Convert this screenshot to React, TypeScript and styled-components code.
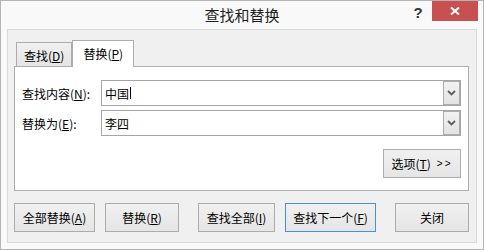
import React from "react";
import styled, { createGlobalStyle } from "styled-components";

const GlobalStyle = createGlobalStyle`
  html, body { margin: 0; padding: 0; background: #ffffff; }
  body {
    font-family: "Noto Sans CJK SC", "Noto Sans", sans-serif;
    font-size: 12px;
    color: #000;
  }
  * { box-sizing: border-box; }
  u { text-underline-offset: 1px; }
`;

const Window = styled.div`
  width: 484px;
  height: 250px;
  border: 1px solid #b4b4b4;
  background: #f9f9f9;
  display: flex;
  flex-direction: column;
`;

const TitleBar = styled.div`
  height: 28px;
  flex: none;
  display: grid;
  grid-template-columns: 1fr auto 1fr;
  align-items: start;
`;

const Title = styled.div`
  font-size: 15px;
  line-height: 28px;
  color: #1e1e1e;
  white-space: nowrap;
`;

const Controls = styled.div`
  display: flex;
  justify-content: flex-end;
  align-items: flex-start;
  margin-right: 5px;
`;

const HelpButton = styled.div`
  width: 28px;
  height: 22px;
  display: flex;
  align-items: center;
  justify-content: center;
  font-family: "Liberation Sans", Arial, sans-serif;
  font-weight: bold;
  font-size: 15px;
  color: #333;
`;

const CloseButton = styled.div`
  width: 46px;
  height: 20px;
  background: #c75050;
  display: flex;
  align-items: center;
  justify-content: center;
`;

const Panel = styled.div`
  flex: 1;
  margin: 0 6px 6px;
  border: 1px solid #d9d9d9;
  background: #f0f0f0;
  padding: 10px 7px 10px 6px;
  display: flex;
  flex-direction: column;
`;

const TabStrip = styled.div`
  height: 26px;
  flex: none;
  display: flex;
  align-items: flex-end;
  padding-left: 2px;
  position: relative;
  z-index: 1;
`;

const Tab = styled.div<{ $active?: boolean }>`
  height: ${(p) => (p.$active ? "27px" : "24px")};
  margin-bottom: ${(p) => (p.$active ? "-1px" : "0")};
  padding: ${(p) => (p.$active ? "0 10px 1px" : "1px 7px 0")};
  border: 1px solid #acacac;
  border-bottom: none;
  background: ${(p) =>
    p.$active ? "#ffffff" : "linear-gradient(#f0f0f0, #e5e5e5)"};
  display: flex;
  align-items: center;
  white-space: nowrap;
`;

const Content = styled.div`
  height: 125px;
  flex: none;
  border: 1px solid #adadad;
  background: #ffffff;
  padding: 13px 7px 0;
  display: flex;
  flex-direction: column;
  gap: 4px;
`;

const FieldRow = styled.div`
  display: grid;
  grid-template-columns: 79px 1fr;
  align-items: center;
`;

const Label = styled.div`
  white-space: nowrap;
`;

const Combo = styled.div`
  height: 26px;
  display: flex;
  border: 1px solid #a5a5a5;
  background: #fff;
`;

const ComboText = styled.div`
  flex: 1;
  padding-left: 3px;
  display: flex;
  align-items: center;
  white-space: nowrap;
`;

const Caret = styled.span`
  display: inline-block;
  width: 1px;
  height: 12px;
  margin-left: 1px;
  background: #000;
`;

const DropButton = styled.div`
  width: 17px;
  border: 1px solid #adadad;
  background: linear-gradient(#f2f2f2, #e3e3e3);
  display: flex;
  align-items: center;
  justify-content: center;
`;

const OptionsRow = styled.div`
  display: flex;
  justify-content: flex-end;
  margin-top: 9px;
`;

const Button = styled.div<{ $w: number; $default?: boolean }>`
  width: ${(p) => p.$w}px;
  height: 29px;
  border: 1px solid ${(p) => (p.$default ? "#4a90d9" : "#acacac")};
  background: linear-gradient(#f0f0f0, #e5e5e5);
  display: flex;
  align-items: center;
  justify-content: center;
  white-space: nowrap;
`;

const Arrows = styled.span`
  margin-left: 6px;
  letter-spacing: 2px;
  font-family: "Liberation Sans", Arial, sans-serif;
  font-size: 10px;
`;

const ButtonRow = styled.div`
  margin-top: 12px;
  display: flex;
  gap: 19px;
`;

const ButtonGroup = styled.div`
  display: flex;
  gap: 10px;
`;

const Chevron = () => (
  <svg width="9" height="6" viewBox="0 0 9 6">
    <path d="M1 1 L4.5 4.5 L8 1" fill="none" stroke="#5f5f5f" strokeWidth="1.8" />
  </svg>
);

const CloseX = () => (
  <svg width="10" height="8" viewBox="0 0 10 8">
    <path d="M1 0.5 L9 7.5 M9 0.5 L1 7.5" stroke="#fff" strokeWidth="2" />
  </svg>
);

export default function App() {
  return (
    <>
      <GlobalStyle />
      <Window>
        <TitleBar>
          <div />
          <Title>查找和替换</Title>
          <Controls>
            <HelpButton>?</HelpButton>
            <CloseButton>
              <CloseX />
            </CloseButton>
          </Controls>
        </TitleBar>
        <Panel>
          <TabStrip>
            <Tab>
              查找(<u>D</u>)
            </Tab>
            <Tab $active>
              替换(<u>P</u>)
            </Tab>
          </TabStrip>
          <Content>
            <FieldRow>
              <Label>
                查找内容(<u>N</u>):
              </Label>
              <Combo>
                <ComboText>
                  中国
                  <Caret />
                </ComboText>
                <DropButton>
                  <Chevron />
                </DropButton>
              </Combo>
            </FieldRow>
            <FieldRow>
              <Label>
                替换为(<u>E</u>):
              </Label>
              <Combo>
                <ComboText>李四</ComboText>
                <DropButton>
                  <Chevron />
                </DropButton>
              </Combo>
            </FieldRow>
            <OptionsRow>
              <Button $w={78}>
                选项(<u>T</u>)<Arrows>&gt;&gt;</Arrows>
              </Button>
            </OptionsRow>
          </Content>
          <ButtonRow>
            <ButtonGroup>
              <Button $w={81}>
                全部替换(<u>A</u>)
              </Button>
              <Button $w={74}>
                替换(<u>R</u>)
              </Button>
            </ButtonGroup>
            <ButtonGroup>
              <Button $w={77}>
                查找全部(<u>I</u>)
              </Button>
              <Button $w={91} $default>
                查找下一个(<u>F</u>)
              </Button>
            </ButtonGroup>
            <Button $w={74}>关闭</Button>
          </ButtonRow>
        </Panel>
      </Window>
    </>
  );
}
